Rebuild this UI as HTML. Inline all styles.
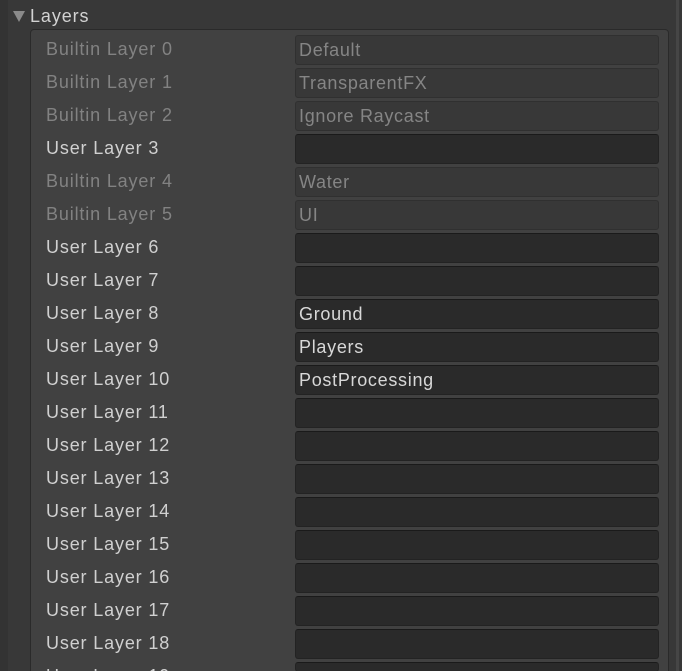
<!DOCTYPE html>
<html><head><style>
html,body{margin:0;padding:0;width:682px;height:671px;overflow:hidden;background:#383838;font-family:"Liberation Sans",sans-serif;position:relative;}
.strip{position:absolute;left:0;top:0;width:8px;height:671px;background:#333;}
.sb{position:absolute;left:676px;top:0;width:3px;height:671px;background:#464646;}
.tri{position:absolute;left:13px;top:11px;width:0;height:0;border-left:6px solid transparent;border-right:6px solid transparent;border-top:11px solid #8a8a8a;}
.hdr{position:absolute;left:30px;top:6px;font-size:18px;color:#d2d2d2;letter-spacing:0.9px;}
.box{position:absolute;left:30px;top:29px;width:637px;height:650px;background:#414141;border:1px solid #2a2a2a;border-radius:4px;}
.lbl{position:absolute;left:46px;font-size:18px;letter-spacing:0.85px;color:#d0d0d0;height:30px;line-height:32px;white-space:nowrap;}
.lbl.d{color:#828282;}
.f{position:absolute;left:295px;height:28px;border:1px solid #232323;border-top-color:#1a1a1a;background:#2a2a2a;border-radius:3px;font-size:18px;letter-spacing:0.7px;color:#d8d8d8;line-height:29px;padding-left:3px;width:359px;white-space:nowrap;}
.f.d{background:#383838;border-color:#303030;color:#858585;}
</style></head><body>
<div class="strip"></div>
<div class="sb"></div>
<div class="tri"></div>
<div class="hdr">Layers</div>
<div class="box"></div>
<div class="lbl d" style="top:33px">Builtin Layer 0</div><div class="f d" style="top:35px">Default</div>
<div class="lbl d" style="top:66px">Builtin Layer 1</div><div class="f d" style="top:68px">TransparentFX</div>
<div class="lbl d" style="top:99px">Builtin Layer 2</div><div class="f d" style="top:101px">Ignore Raycast</div>
<div class="lbl" style="top:132px">User Layer 3</div><div class="f" style="top:134px"></div>
<div class="lbl d" style="top:165px">Builtin Layer 4</div><div class="f d" style="top:167px">Water</div>
<div class="lbl d" style="top:198px">Builtin Layer 5</div><div class="f d" style="top:200px">UI</div>
<div class="lbl" style="top:231px">User Layer 6</div><div class="f" style="top:233px"></div>
<div class="lbl" style="top:264px">User Layer 7</div><div class="f" style="top:266px"></div>
<div class="lbl" style="top:297px">User Layer 8</div><div class="f" style="top:299px">Ground</div>
<div class="lbl" style="top:330px">User Layer 9</div><div class="f" style="top:332px">Players</div>
<div class="lbl" style="top:363px">User Layer 10</div><div class="f" style="top:365px">PostProcessing</div>
<div class="lbl" style="top:396px">User Layer 11</div><div class="f" style="top:398px"></div>
<div class="lbl" style="top:429px">User Layer 12</div><div class="f" style="top:431px"></div>
<div class="lbl" style="top:462px">User Layer 13</div><div class="f" style="top:464px"></div>
<div class="lbl" style="top:495px">User Layer 14</div><div class="f" style="top:497px"></div>
<div class="lbl" style="top:528px">User Layer 15</div><div class="f" style="top:530px"></div>
<div class="lbl" style="top:561px">User Layer 16</div><div class="f" style="top:563px"></div>
<div class="lbl" style="top:594px">User Layer 17</div><div class="f" style="top:596px"></div>
<div class="lbl" style="top:627px">User Layer 18</div><div class="f" style="top:629px"></div>
<div class="lbl" style="top:660px">User Layer 19</div><div class="f" style="top:662px;height:8px"></div>
</body></html>
